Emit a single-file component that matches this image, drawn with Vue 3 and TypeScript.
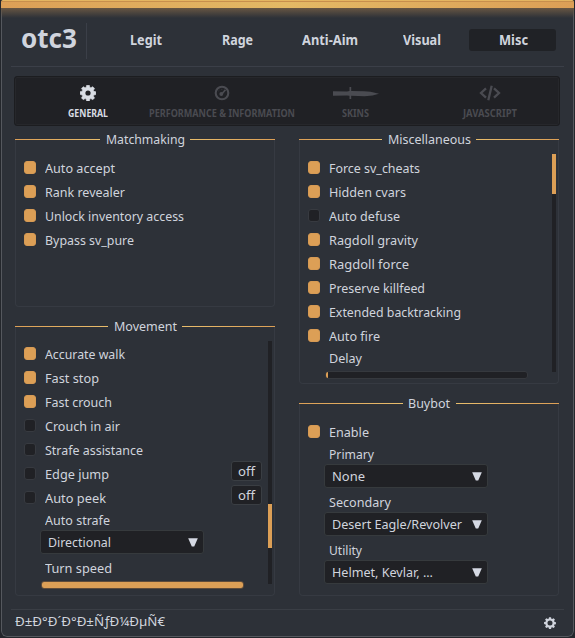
<script setup lang="ts">
import type { Directive } from 'vue'

interface Row {
  kind: 'check' | 'label' | 'select' | 'slider'
  text: string
  w: number
  on?: boolean
  key?: boolean
  value?: number
}
interface Group { id: string; title: string; w: number; rows: Row[]; thumb?: string }

const check = (text: string, w: number, on = true, key = false): Row => ({ kind: 'check', text, w, on, key })
const label = (text: string, w: number): Row => ({ kind: 'label', text, w })
const select = (text: string, w: number): Row => ({ kind: 'select', text, w })
const slider = (value: number): Row => ({ kind: 'slider', text: '', w: 0, value })

const columns: Group[][] = [
  [
    {
      id: 'matchmaking', title: 'Matchmaking', w: 79,
      rows: [
        check('Auto accept', 70), check('Rank revealer', 80),
        check('Unlock inventory access', 139), check('Bypass sv_pure', 89),
      ],
    },
    {
      id: 'movement', title: 'Movement', w: 63, thumb: 'low',
      rows: [
        check('Accurate walk', 80), check('Fast stop', 54), check('Fast crouch', 67),
        check('Crouch in air', 75, false), check('Strafe assistance', 98, false),
        check('Edge jump', 64, false, true), check('Auto peek', 61, false, true),
        label('Auto strafe', 65), select('Directional', 63), label('Turn speed', 67), slider(100),
      ],
    },
  ],
  [
    {
      id: 'miscellaneous', title: 'Miscellaneous', w: 83, thumb: 'high',
      rows: [
        check('Force sv_cheats', 91), check('Hidden cvars', 77), check('Auto defuse', 71, false),
        check('Ragdoll gravity', 89), check('Ragdoll force', 80), check('Preserve killfeed', 96),
        check('Extended backtracking', 132), check('Auto fire', 51), label('Delay', 33), slider(1),
      ],
    },
    {
      id: 'buybot', title: 'Buybot', w: 42,
      rows: [
        check('Enable', 40), label('Primary', 45), select('None', 33),
        label('Secondary', 62), select('Desert Eagle/Revolver', 130),
        label('Utility', 33), select('Helmet, Kevlar, ...', 101),
      ],
    },
  ],
]

const nav = [
  { text: 'Legit', w: 32 }, { text: 'Rage', w: 31 }, { text: 'Anti-Aim', w: 56 },
  { text: 'Visual', w: 38 }, { text: 'Misc', w: 29 },
]
const tabs = [
  { text: 'GENERAL', w: 40 }, { text: 'PERFORMANCE & INFORMATION', w: 146 },
  { text: 'SKINS', w: 27 }, { text: 'JAVASCRIPT', w: 54 },
]
const gear = 'M6.6 0h2.8l.5 2.1 1.1.5 1.9-1.2 1.9 1.9-1.2 1.9.5 1.1 2.1.5v2.8l-2.1.5-.5 1.1 1.2 1.9-1.9 1.9-1.9-1.2-1.1.5-.5 2.1H6.6l-.5-2.1-1.1-.5-1.9 1.2-1.9-1.9 1.2-1.9-.5-1.1L-.2 9.400V6.600l2.100-.5.5-1.100L1.200 3.300l1.900-1.900L5 2.600l1.100-.5z'

/* Condenses or widens a label to its design width. */
const vFit: Directive<HTMLElement, number> = {
  mounted(el, { value }) {
    const natural = el.getBoundingClientRect().width
    el.style.transform = `scaleX(${value / natural})`
    el.style.marginRight = `${value - natural}px`
  },
}
</script>

<template>
  <div class="window">
    <div class="accent"></div>
    <header>
      <div class="brand"><span v-fit="56" class="t">otc3</span></div>
      <nav>
        <div v-for="(n, i) in nav" :key="n.text" class="nav-item" :class="{ active: i === 4 }">
          <span v-fit="n.w" class="t">{{ n.text }}</span>
        </div>
      </nav>
    </header>
    <div class="tabs">
      <div v-for="(t, i) in tabs" :key="t.text" class="tab" :class="{ active: i === 0 }">
        <div class="tab-icon">
          <svg v-if="i === 0" width="16" height="16" viewBox="-0.3 -0.3 16.6 16.600">
            <path :d="gear" fill="currentColor" stroke="currentColor" stroke-width=".6" stroke-linejoin="round" />
            <circle cx="8" cy="8" r="2.700" fill="#202125" />
          </svg>
          <svg v-else-if="i === 1" width="16" height="16" viewBox="0 0 16 16">
            <circle cx="8" cy="8" r="6.300" fill="none" stroke="currentColor" stroke-width="2.100" />
            <path d="M7 10 11.500 4.700" stroke="currentColor" stroke-width="1.700" />
            <circle cx="7.300" cy="9" r="1.900" fill="currentColor" />
            <path d="M4.300 6.200 5.500 5M7 4.300h1.500" stroke="currentColor" stroke-width=".7" opacity=".6" />
          </svg>
          <svg v-else-if="i === 2" width="46" height="14" viewBox="0 0 46 14">
            <path d="M0 5.200 14 5.500 16.500 5.100V1h1.700v4.100L31 5.200l6.500.6 8.500 2-6.500 1.700-8 .7-13.300-.4V13h-1.700V9.700L14 9.400 0 9.800z" fill="currentColor" />
          </svg>
          <svg v-else width="22" height="16" viewBox="0 0 22 16" fill="none" stroke="currentColor" stroke-width="2.300">
            <path d="M7 3.300 2 8l5 4.700M15 3.300 20 8l-5 4.700M12.700.8 9.300 15.200" />
          </svg>
        </div>
        <div class="tab-label"><span v-fit="t.w" class="t">{{ t.text }}</span></div>
      </div>
    </div>
    <main>
      <div v-for="(col, c) in columns" :key="c" class="column">
        <section v-for="g in col" :key="g.id" class="group" :class="g.id">
          <div class="title">
            <i class="rule"></i><h2><span v-fit="g.w" class="t">{{ g.title }}</span></h2><i class="rule right"></i>
          </div>
          <div class="body">
            <div class="rows">
              <div v-for="(r, k) in g.rows" :key="k" :class="r.kind">
                <template v-if="r.kind === 'check'">
                  <i class="box" :class="{ on: r.on }"></i>
                  <span v-fit="r.w" class="t">{{ r.text }}</span>
                  <div v-if="r.key" class="key"><span v-fit="17" class="t">off</span></div>
                </template>
                <span v-else-if="r.kind === 'label'" v-fit="r.w" class="t">{{ r.text }}</span>
                <template v-else-if="r.kind === 'select'">
                  <span v-fit="r.w" class="t">{{ r.text }}</span>
                  <svg width="10" height="9" viewBox="0 0 10 9"><path d="M.2.300h9.600L6.200 8.500H3.800z" fill="#d5d9e3" /></svg>
                </template>
                <div v-else class="fill" :style="{ width: r.value + '%' }"></div>
              </div>
            </div>
            <div v-if="g.thumb" class="scroll"><i :class="g.thumb"></i></div>
          </div>
        </section>
      </div>
    </main>
    <footer>
      <span v-fit="150" class="t">Ð±Ð°Ð´Ð°Ð±ÑƒÐ¼ÐµÑ€</span>
      <svg width="12" height="12" viewBox="-0.3 -0.3 16.600 16.600">
        <path :d="gear" fill="currentColor" />
        <circle cx="8" cy="8" r="3.500" fill="#2d3138" />
      </svg>
    </footer>
  </div>
</template>

<style>
body { margin: 0; background: #24252c; }
</style>

<style scoped>
* { box-sizing: border-box; }
.window {
  width: 575px; height: 638px; display: flex; flex-direction: column; overflow: hidden;
  color: #d0d4dd; background: #2d3138;
  font: 13px/18px "Noto Sans", "Open Sans", sans-serif;
  border: 1px solid #24272c; border-top: 0; border-radius: 3px 3px 7px 7px;
  box-shadow: inset 0 0 0 1px #55585e;
}
.t { display: inline-block; white-space: nowrap; transform-origin: 0 50%; flex: none; }
.accent {
  height: 8px; flex: none; margin: 0 -1px;
  background: linear-gradient(90deg, #dc9f56, #e3b965 50%, #dc9f56);
  border-top: 1px solid #e4b561; box-shadow: inset 0 1px #c88f4d;
}
header {
  height: 59px; flex: none; margin: 0 10px; padding-left: 10px; display: flex;
  border-bottom: 1px solid #3b3f48; position: relative;
}
header::before {
  content: ""; position: absolute; left: -10px; right: -10px; top: 0; height: 10px;
  background: linear-gradient(#675643, #2d313800);
}
.brand {
  width: 66px; height: 36px; margin-top: 15px; border-right: 1px solid #3b3f48;
  font: bold 26px/31px "Noto Sans", sans-serif; position: relative;
}
nav { display: flex; gap: 5px; margin: 21px 0 0 14px; font: bold 14px/22px "Noto Sans", sans-serif; }
.nav-item { width: 87px; height: 22px; padding-left: 2px; display: flex; justify-content: center; border-radius: 3px; }
.nav-item.active { background: #202226; }
.tabs {
  margin: 9px 13px 0; width: 546px; height: 50px; flex: none; display: grid;
  grid-template-columns: 134px 134px 134px 134px; padding: 0 0 0 5.500px; background: #202125;
  border: 1px solid #1c1d20; border-radius: 3px; box-shadow: inset 0 0 0 1px #26272b;
}
.tab { color: #4a4b51; display: flex; flex-direction: column; align-items: center; }
.tab.active { color: #d9dde4; }
.tab-icon { height: 16px; margin-top: 8px; display: flex; align-items: center; }
.tab-label { margin-top: 5px; font: bold 10px/14px "Noto Sans", sans-serif; }
main { flex: none; height: 483px; padding-left: 14px; display: flex; gap: 24px; }
.column { width: 260px; }
.group { display: flex; flex-direction: column; position: relative; }
.matchmaking { height: 187px; padding-bottom: 6px; }
.movement { height: 283px; }
.miscellaneous { height: 264px; padding-bottom: 6px; }
.buybot { height: 206px; }
.title { height: 26px; display: flex; align-items: center; flex: none; }
.title h2 { margin: -1px 5.500px 0 5.500px; font: 13px/18px "Noto Sans", sans-serif; }
.rule { height: 1px; flex: 1; background: linear-gradient(90deg, #dc9f56, #e8bd6c); }
.rule.right { background: linear-gradient(270deg, #dc9f56, #e8bd6c); }
.body {
  flex: 1; margin-top: -12px; border: 1px solid #363a42; border-top: 0;
  border-radius: 0 0 4px 4px; display: flex; position: relative; padding: 16px 0 0 7px;
}
.movement .body { padding-top: 15px; }
.rows { width: 240px; }
.check { height: 24px; display: flex; align-items: center; }
.box {
  width: 12px; height: 13px; margin: -1px 8.500px 0 1px; border-radius: 3px;
  background: #202125; border: 1px solid #373a40; flex: none;
}
.box.on { background: #dc9f56; border-color: #d69a54; }
.key {
  width: 31px; height: 20px; margin: -6px 1px 0 auto; border: 1px solid #3a3e43;
  border-radius: 3px; background: #202125; display: flex; justify-content: center; align-items: center; line-height: 16px;
}
.label { height: 20px; padding-left: 21.500px; display: flex; align-items: center; }
.select {
  width: 164px; height: 24px; margin: 0 0 4px 17px; padding: 0 5px 0 6.500px; display: flex;
  justify-content: space-between; align-items: center; background: #202125;
  border: 1px solid #363a3d; border-radius: 3px;
}
.slider {
  width: 203px; height: 8px; margin: 3px 0 0 18px; border: 1px solid #36393e;
  background: #202125; border-radius: 3px; overflow: hidden;
}
.fill { height: 100%; background: #dc9f56; }
.movement .slider { border-color: #5e4b3a; }
.scroll { position: absolute; right: 2px; top: 14px; bottom: 11px; width: 4px; background: #202125; }
.scroll i { display: block; background: #dc9f56; }
.high { height: 40px; }
.low { height: 44px; margin-top: 163px; }
footer {
  height: 27px; flex: none; margin: 0 10px; padding: 2px 8px 0 4px; display: flex;
  justify-content: space-between; border-top: 1px solid #3a3e45; align-items: flex-start; color: #d0d4dd;
}
footer svg { margin-top: 5px; }
</style>
